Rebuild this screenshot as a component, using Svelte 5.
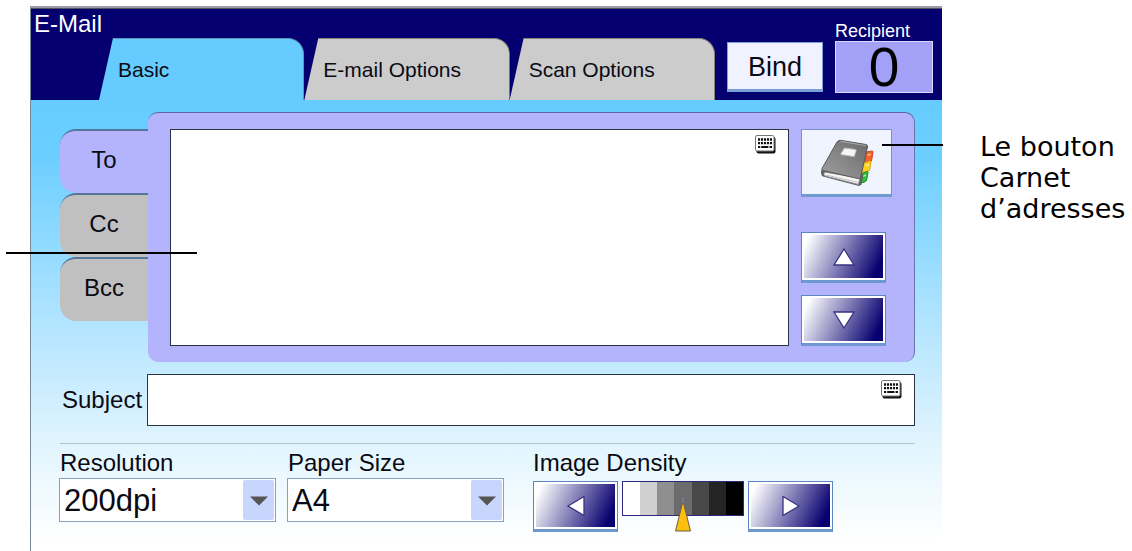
<script>
  const tabs = ['Basic', 'E-mail Options', 'Scan Options'];
  const fields = ['To', 'Cc', 'Bcc'];
  const shades = ['#ffffff', '#d0d0d0', '#8f8f8f', '#6c6c6c', '#484848', '#242424', '#000000'];
  let activeTab = $state(0);
  let activeField = $state(0);
  let recipients = $state('');
  let subject = $state('');
  let resolution = $state('200dpi');
  let paper = $state('A4');
  let density = $state(3);
</script>

{#snippet keyboard()}
  <svg class="keyboard" width="22" height="20" viewBox="0 0 22 20" aria-hidden="true">
    <rect x="1.500" y="2" width="19" height="16.500" rx="2" fill="#111" />
    <rect x=".5" y=".5" width="18.500" height="15.500" rx="1.500" fill="#fff" stroke="#777" />
    <path d="M3 4.500h14M3 8.200h14" stroke="#111" stroke-width="2.300" stroke-dasharray="2.100 .9" />
    <path d="M3 12h2.200M6.200 12h7.200M14.500 12h2.500" stroke="#111" stroke-width="2" />
  </svg>
{/snippet}

{#snippet arrow(turn)}
  <svg width="24" height="20" viewBox="-12 -10 24 20" aria-hidden="true">
    <path
      d={{
        up: 'M0 -8L10 8H-10Z',
        down: 'M0 8L10 -8H-10Z',
        left: 'M-8 0L8 -9.500V9.500Z',
        right: 'M8 0L-8 -9.500V9.500Z'
      }[turn]}
      fill="#fff" stroke="#3b3285" stroke-width="1.300" />
  </svg>
{/snippet}

<div class="page">
  <main class="device">
    <header>
      <div class="heading">
        <h1>E-Mail</h1>
        <nav>
          {#each tabs as tab, i}
            <button class="tab" class:active={activeTab === i} onclick={() => (activeTab = i)}>{tab}</button>
          {/each}
        </nav>
      </div>
      <button class="bind">Bind</button>
      <div class="recipient">
        <span>Recipient</span>
        <output>0</output>
      </div>
    </header>

    <div class="body">
      <section class="address">
        <div class="fields">
          {#each fields as field, i}
            <button class:active={activeField === i} onclick={() => (activeField = i)}>{field}</button>
          {/each}
        </div>
        <div class="panel">
          <div class="entry">
            <textarea aria-label="To" bind:value={recipients}></textarea>
            {@render keyboard()}
          </div>
          <div class="actions">
            <button class="book" aria-label="Carnet d'adresses">
              <svg width="54" height="50" viewBox="0 0 54 50" aria-hidden="true">
                <defs>
                  <linearGradient id="cover" x1="0" y1="1" x2="1" y2="0">
                    <stop offset="0" stop-color="#a0a0a0" />
                    <stop offset=".5" stop-color="#858585" />
                    <stop offset="1" stop-color="#686868" />
                  </linearGradient>
                </defs>
                <path d="M46 14l6-1q1 0 1 1l-1.500 9-6.500 2z" fill="#f0642a" stroke="#d2421c" />
                <path d="M43 25.500l7-2.500q1 0 1 1l-1.500 8.500-7 2.500z" fill="#ffd21e" stroke="#dfa30c" />
                <path d="M41 36l6-2.500q1 0 1 1l-1.500 8q-1 2-7 2.500z" fill="#2fc23b" stroke="#128a22" />
                <path d="M47.500 17l3-.5M46 27.500l3-.7M43 38l3-.7" stroke="#fff" stroke-opacity=".6" stroke-width="1.500" />
                <path d="M1.500 32q-1.500 4 1.500 6.500l36 9.500 2.500-1.500 2-10z" fill="#5d5d5d" />
                <path d="M4.500 34q-1.500 3 .5 4l33.500 8.500 1.500-6.500z" fill="#f6f6f6" stroke="#888" />
                <path d="M6 37l32.500 7.500" stroke="#c4c4c4" />
                <path d="M17 4q1.500-2 3.500-1.700L46 6.500q2 .5 1.500 2.500L40.500 39.500q-.5 1.500-2 1.200L3 32.500q-2-.5-1-2z" fill="url(#cover)" stroke="#5a5a5a" />
                <path d="M20.500 3.300L46 7.700" stroke="#aaa" />
                <path d="M24.500 10l11 1.500q1 .2.700 1.200l-2 6-12.700-2q-1-.2-.6-1.200z" fill="#f5f5f5" stroke="#b5b5b5" />
              </svg>
              <i class="callout-book"></i>
            </button>
            <button class="step" aria-label="Up">{@render arrow('up')}</button>
            <button class="step" aria-label="Down">{@render arrow('down')}</button>
          </div>
          <i class="callout-entry"></i>
        </div>
      </section>

      <section class="subject">
        <label for="subject">Subject</label>
        <div class="entry">
          <input id="subject" type="text" bind:value={subject} />
          {@render keyboard()}
        </div>
      </section>

      <section class="settings">
        <div class="setting">
          <label for="resolution">Resolution</label>
          <div class="select">
            <select id="resolution" bind:value={resolution}>
              <option>200dpi</option>
              <option>300dpi</option>
            </select>
            <svg viewBox="0 0 31 39" aria-hidden="true"><path d="M7 16h18l-9 9z" fill="#555" /></svg>
          </div>
        </div>
        <div class="setting">
          <label for="paper">Paper Size</label>
          <div class="select">
            <select id="paper" bind:value={paper}>
              <option>A4</option>
              <option>A5</option>
            </select>
            <svg viewBox="0 0 31 39" aria-hidden="true"><path d="M7 16h18l-9 9z" fill="#555" /></svg>
          </div>
        </div>
        <div class="setting density">
          <span class="label">Image Density</span>
          <div class="range">
            <button class="step" aria-label="Lighter" onclick={() => (density = Math.max(0, density - 1))}>
              {@render arrow('left')}
            </button>
            <div class="scale">
              <div class="shades">
                {#each shades as shade}
                  <i style:background={shade}></i>
                {/each}
              </div>
              <svg class="marker" style:left="{((density + 0.5) / 7) * 100}%" width="18" height="35" viewBox="0 0 18 35" aria-hidden="true">
                <path d="M9 4L16.500 34H1.500Z" fill="#fdbf0d" stroke="#6b5a4a" />
                <path d="M9 0v6" stroke="#7a7494" stroke-width="2" />
              </svg>
            </div>
            <button class="step" aria-label="Darker" onclick={() => (density = Math.min(6, density + 1))}>
              {@render arrow('right')}
            </button>
          </div>
        </div>
      </section>
    </div>
  </main>

  <aside>Le bouton Carnet d’adresses</aside>
</div>

<style>
  :global(body) {
    background: #fff;
  }
  .page,
  .page :global(*) {
    box-sizing: border-box;
  }
  .page {
    display: flex;
    min-height: 100vh;
    padding: 6px 0 0 30px;
    font-family: 'Liberation Sans', Arial, sans-serif;
    font-size: 24px;
    color: #0a0a14;
  }
  button,
  input,
  textarea,
  select {
    font: inherit;
    color: inherit;
    margin: 0;
    padding: 0;
    border: 0;
    border-radius: 0;
  }
  svg {
    display: block;
  }
  .device {
    flex: 1;
    display: flex;
    flex-direction: column;
    border-left: 1px solid #7d8a94;
    border-top: 2px solid #9b9ca6;
  }
  header {
    display: flex;
    align-items: flex-end;
    border-top: 1px solid #55555f;
    padding-right: 9px;
    background: #05006f;
  }
  .heading {
    flex: 1;
  }
  h1 {
    margin: 0;
    padding-left: 3px;
    font-size: 24px;
    font-weight: 400;
    line-height: 29px;
    color: #fff;
  }
  nav {
    display: flex;
    padding: 0 12px 0 68px;
  }
  .tab {
    flex: 1;
    height: 62px;
    padding-left: 19px;
    border-top: 1px solid #85857c;
    border-right: 1px solid #85857c;
    border-top-right-radius: 16px;
    clip-path: polygon(14px 0, 100% 0, 100% 100%, 0 100%);
    background: #ccc;
    font-size: 21px;
    text-align: left;
    white-space: nowrap;
  }
  .tab.active {
    background: #66ccff;
    border-color: #5798b5;
  }
  .bind {
    width: 96px;
    height: 50px;
    margin: 0 12px 8px 0;
    padding-top: 2px;
    border: 1px solid #7fa0d8;
    border-bottom: 3px solid #7ba0d6;
    background: #f0f3ff;
    font-size: 27px;
  }
  .recipient {
    display: flex;
    flex-direction: column;
    width: 98px;
    margin-bottom: 7px;
    color: #fff;
    font-size: 18px;
    line-height: 20px;
  }
  output {
    height: 52px;
    border: 1px solid #d9d9ff;
    background: #a3a0f8;
    color: #000;
    font-size: 55px;
    line-height: 50px;
    text-align: center;
  }
  .body {
    flex: 1;
    padding: 12px 27px 18px 29px;
    background: linear-gradient(#66ccff 0, #6bceff 12%, #c0e9ff 57%, #e2f5fe 77%, #fff 98%);
  }
  .address {
    display: flex;
  }
  .fields {
    display: flex;
    flex-direction: column;
    width: 88px;
    padding-top: 17px;
  }
  .fields button {
    height: 64px;
    padding-bottom: 4px;
    border-top: 2px solid #56759b;
    border-radius: 16px 0 0 16px;
    background: #c0c0c0;
  }
  .fields button.active {
    background: #b4b4fd;
  }
  .panel {
    position: relative;
    flex: 1;
    display: flex;
    gap: 12px;
    padding: 16px 22px 16px 22px;
    border-top: 1px solid #6464a4;
    border-right: 1px solid #6b74ac;
    border-radius: 10px;
    background: #b4b4fd;
  }
  .entry {
    position: relative;
    flex: 1;
  }
  textarea,
  input {
    display: block;
    width: 100%;
    height: 100%;
    padding: 8px 48px 8px 8px;
    border: 1px solid #2c3444;
    background: #fff;
    resize: none;
  }
  .keyboard {
    position: absolute;
    top: 6px;
    right: 12px;
  }
  .actions {
    display: flex;
    flex-direction: column;
    gap: 12px;
    width: 91px;
  }
  .book {
    position: relative;
    display: grid;
    place-items: center;
    height: 68px;
    margin-bottom: 23px;
    padding-top: 2px;
    border: 1px solid #7792c9;
    border-bottom: 3px solid #6f9bd0;
    background: #f0f4ff;
  }
  .callout-book {
    position: absolute;
    left: 80px;
    top: 14px;
    width: 61px;
    height: 2px;
    background: #000;
  }
  .callout-entry {
    position: absolute;
    left: -142px;
    top: 139px;
    width: 191px;
    height: 2px;
    background: #000;
  }
  .step {
    display: grid;
    place-items: center;
    width: 85px;
    height: 51px;
    border: 1px solid #5e83c4;
    border-bottom: 3px solid #6f98d0;
    background: linear-gradient(115deg, #fff 8%, #07006f 88%);
    box-shadow: inset 0 0 0 2px #fff;
  }
  .subject {
    display: flex;
    align-items: center;
    height: 52px;
    margin-top: 12px;
  }
  .subject label {
    width: 87px;
    padding-left: 2px;
  }
  .subject .entry {
    height: 100%;
  }
  .settings {
    display: flex;
    gap: 12px;
    margin-top: 17px;
    padding-top: 5px;
    border-top: 1px solid #b3c5ce;
  }
  .setting {
    flex: 0 1 216px;
  }
  .setting label,
  .label {
    display: block;
    line-height: 28px;
    white-space: nowrap;
  }
  .density {
    flex: none;
    margin-left: 17px;
  }
  .select {
    position: relative;
    margin: 1px 0 0 -1px;
  }
  select {
    display: block;
    appearance: none;
    width: 100%;
    height: 44px;
    padding-left: 4px;
    border: 1px solid #84a3c4;
    background: #fff;
    font-size: 31px;
  }
  .select svg {
    position: absolute;
    top: 2px;
    right: 2px;
    width: 31px;
    height: 40px;
    background: #c8d5fc;
    border-radius: 2px;
    pointer-events: none;
  }
  .range {
    display: flex;
    gap: 4px;
    margin-top: 4px;
  }
  .scale {
    position: relative;
    width: 122px;
  }
  .shades {
    display: flex;
    height: 35px;
    border: 1px solid #30277c;
  }
  .shades i {
    flex: 1;
  }
  .marker {
    position: absolute;
    bottom: 0;
    transform: translateX(-50%);
  }
  aside {
    flex: 0 0 190px;
    padding: 125px 0 0 38px;
    font-family: 'DejaVu Sans', Verdana, sans-serif;
    font-size: 27px;
    line-height: 31px;
    color: #000;
  }
</style>
